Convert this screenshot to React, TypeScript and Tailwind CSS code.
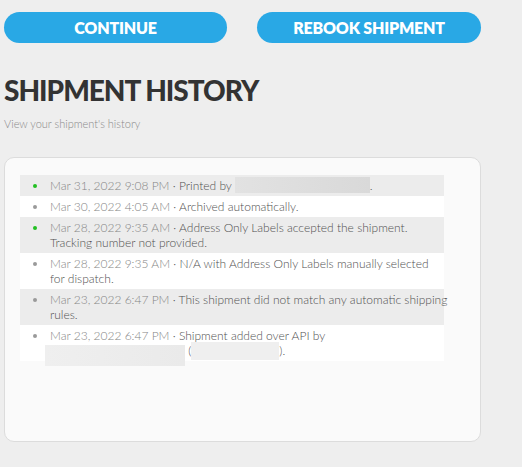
import React from "react";

const Box = ({ w, h, top, cls }: { w: number; h: number; top: number; cls: string }) => (
  <span className="relative inline-block h-[15px] align-top" style={{ width: w }}>
    <span className={`absolute left-0 ${cls}`} style={{ top, width: w, height: h }} />
  </span>
);

const rows: { green: boolean; date: string; text: React.ReactNode; grey: boolean }[] = [
  {
    green: true,
    grey: true,
    date: "Mar 31, 2022 9:08 PM",
    text: (
      <>
        Printed by <Box w={135} h={16} top={-1} cls="bg-gradient-to-r from-[#e2e2e2] to-[#d9d9d9]" />.
      </>
    ),
  },
  { green: false, grey: false, date: "Mar 30, 2022 4:05 AM", text: "Archived automatically." },
  {
    green: true,
    grey: true,
    date: "Mar 28, 2022 9:35 AM",
    text: (
      <>
        Address Only Labels accepted the shipment.
        <br />
        Tracking number not provided.
      </>
    ),
  },
  {
    green: false,
    grey: false,
    date: "Mar 28, 2022 9:35 AM",
    text: (
      <>
        N/A with Address Only Labels manually selected
        <br />
        for dispatch.
      </>
    ),
  },
  {
    green: false,
    grey: true,
    date: "Mar 23, 2022 6:47 PM",
    text: (
      <>
        This shipment did not match any automatic shipping
        <br />
        rules.
      </>
    ),
  },
  {
    green: false,
    grey: false,
    date: "Mar 23, 2022 6:47 PM",
    text: (
      <>
        Shipment added over API by
        <br />
        <span className="ml-[-5px]" />
        <Box w={140} h={21} top={2} cls="bg-gradient-to-r from-[#efefef] to-[#eaeaea]" /> (
        <Box w={88} h={18} top={-1} cls="bg-[#efefef]" />
        ).
      </>
    ),
  },
];

export default function App() {
  return (
    <div
      className="min-h-[467px] w-[522px] bg-[#eeeeee] px-[4px] pt-[12px]"
      style={{ fontFamily: "Lato, 'Liberation Sans', sans-serif" }}
    >
      <div className="flex gap-[30px]">
        <button className="flex h-[31px] w-[223px] items-center justify-center rounded-full bg-[#29a8e5] text-[16px] font-extrabold tracking-[-0.2px] text-white">
          CONTINUE
        </button>
        <button className="flex h-[31px] w-[224px] items-center justify-center rounded-full bg-[#29a8e5] text-[16px] font-extrabold tracking-[-0.2px] text-white">
          REBOOK SHIPMENT
        </button>
      </div>

      <h1 className="mt-[30px] text-[28px] font-black leading-[34px] tracking-[-1px] text-[#333333]">
        SHIPMENT HISTORY
      </h1>
      <p className="mt-[10px] text-[11px] font-light leading-[14px] text-[#8a8a8a]">
        View your shipment's history
      </p>

      <div className="mt-[26px] h-[285px] w-[477px] rounded-[10px] border border-[#dcdcdc] bg-[#fafafa] pl-[15px] pt-[17px]">
        <ul className="w-[424px]">
          {rows.map((r, i) => (
            <li
              key={i}
              className={`flex py-[3px] text-[12px] font-light leading-[15px] ${r.grey ? "bg-[#ececec]" : "bg-white"}`}
            >
              <span className="flex w-[30px] shrink-0 justify-end pr-[13px] pt-[6px]">
                <span
                  className={`block h-[4px] w-[4px] rounded-full ${r.green ? "bg-[#22c022]" : "bg-[#9a9a9a]"}`}
                />
              </span>
              <span className="whitespace-nowrap text-[#505050]">
                <span className="text-[#858585]">{r.date}</span> · {r.text}
              </span>
            </li>
          ))}
        </ul>
      </div>
    </div>
  );
}
